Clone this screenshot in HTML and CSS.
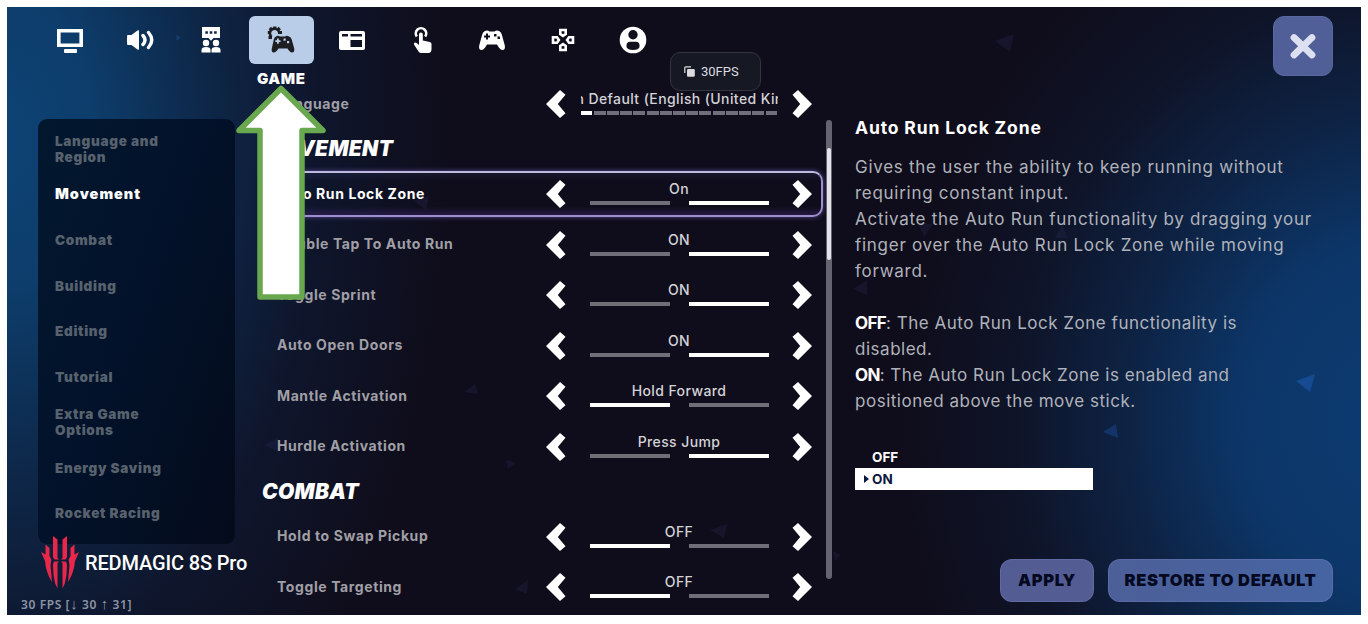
FILE: index.html
```html
<!DOCTYPE html>
<html lang="en">
<head>
    <meta charset="UTF-8">
    <meta name="viewport" content="width=device-width, initial-scale=1.0">
    <title>Game Settings</title>
    <link rel="stylesheet" href="styles.css">
</head>
<body>
    <div class="screen">
        <svg class="shards" viewBox="0 0 1354 608">
            <g fill="#2c2a58" opacity="0.28">
                <path d="M988 34l19-7-4 18z"/><path d="M911 216l15 1-9 13z"/><path d="M1048 231l7-13 6 13z"/>
                <path d="M846 282l14-9v15z"/><path d="M457 385l11-8 3 10z"/><path d="M499 453l10 3-8 6z"/>
                <path d="M257 438l14-7-1 13z"/><path d="M508 582l13-9-1 14z"/><path d="M703 523l17-6-3 14z"/>
                <path d="M826 544l8 4-6 6z"/><path d="M407 194l15-5-3 14z"/>
            </g>
            <path fill="#164a91" d="M1289 374l19-7-5 18z"/>
            <path fill="#173d7a" opacity="0.7" d="M1096 425l13-8 2 14z"/>
            <path fill="#1d4a80" opacity="0.6" d="M169 28l5 2-4 4z"/>
        </svg>

        <header class="topbar">
            <nav class="tabs">
                <a class="tab"><svg width="28" height="28" viewBox="0 0 28 28"><path fill="none" stroke="#fff" stroke-width="3.600" d="M2.800 4.800h22.400v14.400H2.800z"/><rect x="8" y="23" width="13" height="4" rx="1" fill="#fff"/></svg></a>
                <a class="tab"><svg width="28" height="28" viewBox="0 0 28 28"><path fill="#fff" d="M1 10q0-1 1-1h3.500l6-4.500q1.500-1 1.500 1v17q0 2-1.500 1l-6-4.500H2q-1 0-1-1z"/><path fill="none" stroke="#fff" stroke-width="3.400" stroke-linecap="round" d="M17 9.500q4 4.500 0 9M22.500 6.500q6.500 7.500 0 15"/></svg></a>
                <a class="tab"><svg width="28" height="28" viewBox="0 0 28 28"><path fill="#fff" fill-rule="evenodd" d="M5 1h18v11h-6.500L14 14.800 11.500 12H5zM8.300 5.200v2.600h2.600V5.200zM12.700 5.200v2.600h2.600V5.200zM17.100 5.200v2.600h2.600V5.200z"/><circle cx="9" cy="17" r="3.200" fill="#fff"/><circle cx="19" cy="17" r="3.200" fill="#fff"/><path fill="#fff" d="M4.500 26.500V24q0-3 4.500-3t4.500 3v2.500zM14.500 26.500V24q0-3 4.500-3t4.500 3v2.500z"/></svg></a>
                <a class="tab active">
                    <svg width="28" height="28" viewBox="0 0 28 28">
                        <path fill="none" stroke="#1d1e22" stroke-width="2.600" d="M4.600 11A4.700 4.700 0 1 1 12.200 6.500"/>
                        <path stroke="#1d1e22" stroke-width="3.200" d="M1.500 11.500h3.500M.8 6.500h3M2.800 2l2.400 2.400M7.800.4v3M12.800 2l-2.400 2.400M11 6.500h4"/>
                        <path fill="#1d1e22" fill-rule="evenodd" d="M9 10.500q2-1.500 4 0h5q2-1.500 4 0 2 .5 2.700 3l2.500 9q.6 4-2.200 4-2 0-4.500-4h-9q-2.500 4-4.700 4-2.700 0-2-4l2-9q.600-2.600 2.200-3zM10 12.500v1.700H8.300v1.800H10v1.700h1.800V16h1.700v-1.800h-1.700v-1.700zM16.500 12.600v2.200h2.200v-2.200zM20 15v2.200h2.200V15z"/>
                    </svg>
                    <span class="tab-name">GAME</span>
                </a>
                <a class="tab"><svg width="28" height="28" viewBox="0 0 28 28"><path fill="#fff" fill-rule="evenodd" d="M3 5h22q2 0 2 2v15q0 2-2 2H3q-2 0-2-2V7q0-2 2-2zM4 8v2.400h6V8zM12.500 8v2.400H24V8zM12.500 14v7H24v-7z"/></svg></a>
                <a class="tab"><svg width="28" height="28" viewBox="0 0 28 28"><path fill="none" stroke="#fff" stroke-width="2.600" d="M8.800 10.500A5.200 5.200 0 1 1 17.200 10.500"/><path fill="#fff" d="M11 8.500q0-2 1.900-2t1.900 2v6l7 1.500q1.700.5 1.700 2v5q0 4-3 4h-7q-2 0-3-1.500l-4.500-7q-.5-1.500 1-2 1.500-.3 4 2.500z"/></svg></a>
                <a class="tab"><svg width="28" height="28" viewBox="0 0 28 28"><path fill="#fff" fill-rule="evenodd" d="M7 5q2.500-1 4.500.5h5Q18.500 4 21 5q2 .7 2.800 3.500l3 11q.700 4.500-2.300 4.500-2.500 0-5.500-5.500H9Q6 24 3.500 24 .5 24 1.200 19.500l3-11Q5 5.700 7 5zM8 7.500v2H6v2h2v2h2v-2h2v-2h-2v-2zM16 8v2.500h2.500V8zM19.500 10.500V13H22v-2.500z"/></svg></a>
                <a class="tab"><svg width="28" height="28" viewBox="0 0 28 28"><path fill="none" stroke="#fff" stroke-width="2.600" d="M11.300 4h5.400v4L14 9.900 11.300 8zM11.300 24h5.400v-4L14 18.100 11.300 20zM4 11.300v5.400h4L9.900 14 8 11.300zM24 11.300v5.400h-4L18.100 14l1.900-2.700z"/></svg></a>
                <a class="tab"><svg width="28" height="28" viewBox="0 0 28 28"><circle cx="14" cy="14" r="13.300" fill="#fff"/><circle cx="14" cy="8.800" r="4.700" fill="#12101d"/><path fill="#12101d" d="M7.500 21v-1.500q0-3.700 3.700-3.700h5.600q3.700 0 3.700 3.700V21q-1 3-6.500 3t-6.500-3z"/></svg></a>
            </nav>
            <button class="close" aria-label="Close"><svg width="60" height="60" viewBox="0 0 60 60"><path stroke="#dde0f1" stroke-width="6.800" stroke-linecap="round" d="M21 21.500L39 39M39 21.500L21 39"/></svg></button>
        </header>

        <main class="content">
            <aside class="sidebar">
                <a>Language and<br>Region</a>
                <a class="current">Movement</a>
                <a>Combat</a>
                <a>Building</a>
                <a>Editing</a>
                <a>Tutorial</a>
                <a>Extra Game<br>Options</a>
                <a>Energy Saving</a>
                <a>Rocket Racing</a>
            </aside>

            <section class="options" id="options">
                <div class="row"><span class="label">Language</span>
                    <div class="stepper">
                        <svg class="chev" viewBox="0 0 20 28"><path d="M0 14L14 0l5.500 4.800-7.700 9.200 7.700 9.200L14 28z"/></svg>
                        <div class="value wide"><span>n Default (English (United Kin</span><div class="bars"><i class="on"></i><i></i><i></i><i></i><i></i><i></i><i></i><i></i><i></i><i></i><i></i><i></i><i></i><i></i><i></i></div></div>
                        <svg class="chev next" viewBox="0 0 20 28"><path d="M0 14L14 0l5.500 4.800-7.700 9.200 7.700 9.200L14 28z"/></svg>
                    </div>
                </div>
                <h2>MOVEMENT</h2>
                <div class="row selected"><span class="label">Auto Run Lock Zone</span>
                    <div class="stepper">
                        <svg class="chev" viewBox="0 0 20 28"><path d="M0 14L14 0l5.500 4.800-7.700 9.200 7.700 9.200L14 28z"/></svg>
                        <div class="value"><span>On</span><div class="bars"><i></i><i class="on"></i></div></div>
                        <svg class="chev next" viewBox="0 0 20 28"><path d="M0 14L14 0l5.500 4.800-7.700 9.200 7.700 9.200L14 28z"/></svg>
                    </div>
                </div>
                <div class="row"><span class="label">Double Tap To Auto Run</span>
                    <div class="stepper">
                        <svg class="chev" viewBox="0 0 20 28"><path d="M0 14L14 0l5.500 4.800-7.700 9.200 7.700 9.200L14 28z"/></svg>
                        <div class="value"><span>ON</span><div class="bars"><i></i><i class="on"></i></div></div>
                        <svg class="chev next" viewBox="0 0 20 28"><path d="M0 14L14 0l5.500 4.800-7.700 9.200 7.700 9.200L14 28z"/></svg>
                    </div>
                </div>
                <div class="row"><span class="label">Toggle Sprint</span>
                    <div class="stepper">
                        <svg class="chev" viewBox="0 0 20 28"><path d="M0 14L14 0l5.500 4.800-7.700 9.200 7.700 9.200L14 28z"/></svg>
                        <div class="value"><span>ON</span><div class="bars"><i></i><i class="on"></i></div></div>
                        <svg class="chev next" viewBox="0 0 20 28"><path d="M0 14L14 0l5.500 4.800-7.700 9.200 7.700 9.200L14 28z"/></svg>
                    </div>
                </div>
                <div class="row"><span class="label">Auto Open Doors</span>
                    <div class="stepper">
                        <svg class="chev" viewBox="0 0 20 28"><path d="M0 14L14 0l5.500 4.800-7.700 9.200 7.700 9.200L14 28z"/></svg>
                        <div class="value"><span>ON</span><div class="bars"><i></i><i class="on"></i></div></div>
                        <svg class="chev next" viewBox="0 0 20 28"><path d="M0 14L14 0l5.500 4.800-7.700 9.200 7.700 9.200L14 28z"/></svg>
                    </div>
                </div>
                <div class="row"><span class="label">Mantle Activation</span>
                    <div class="stepper">
                        <svg class="chev" viewBox="0 0 20 28"><path d="M0 14L14 0l5.500 4.800-7.700 9.200 7.700 9.200L14 28z"/></svg>
                        <div class="value"><span>Hold Forward</span><div class="bars"><i class="on"></i><i></i></div></div>
                        <svg class="chev next" viewBox="0 0 20 28"><path d="M0 14L14 0l5.500 4.800-7.700 9.200 7.700 9.200L14 28z"/></svg>
                    </div>
                </div>
                <div class="row"><span class="label">Hurdle Activation</span>
                    <div class="stepper">
                        <svg class="chev" viewBox="0 0 20 28"><path d="M0 14L14 0l5.500 4.800-7.700 9.200 7.700 9.200L14 28z"/></svg>
                        <div class="value"><span>Press Jump</span><div class="bars"><i></i><i class="on"></i></div></div>
                        <svg class="chev next" viewBox="0 0 20 28"><path d="M0 14L14 0l5.500 4.800-7.700 9.200 7.700 9.200L14 28z"/></svg>
                    </div>
                </div>
                <h2>COMBAT</h2>
                <div class="row"><span class="label">Hold to Swap Pickup</span>
                    <div class="stepper">
                        <svg class="chev" viewBox="0 0 20 28"><path d="M0 14L14 0l5.500 4.800-7.700 9.200 7.700 9.200L14 28z"/></svg>
                        <div class="value"><span>OFF</span><div class="bars"><i class="on"></i><i></i></div></div>
                        <svg class="chev next" viewBox="0 0 20 28"><path d="M0 14L14 0l5.500 4.800-7.700 9.200 7.700 9.200L14 28z"/></svg>
                    </div>
                </div>
                <div class="row"><span class="label">Toggle Targeting</span>
                    <div class="stepper">
                        <svg class="chev" viewBox="0 0 20 28"><path d="M0 14L14 0l5.500 4.800-7.700 9.200 7.700 9.200L14 28z"/></svg>
                        <div class="value"><span>OFF</span><div class="bars"><i class="on"></i><i></i></div></div>
                        <svg class="chev next" viewBox="0 0 20 28"><path d="M0 14L14 0l5.500 4.800-7.700 9.200 7.700 9.200L14 28z"/></svg>
                    </div>
                </div>
            </section>

            <div class="scrollbar"><div class="thumb"></div></div>

            <section class="detail">
                <h1>Auto Run Lock Zone</h1>
                <p>Gives the user the ability to keep running without<br>requiring constant input.<br>Activate the Auto Run functionality by dragging your<br>finger over the Auto Run Lock Zone while moving<br>forward.</p>
                <p class="states"><b>OFF</b>: The Auto Run Lock Zone functionality is<br>disabled.<br><b>ON</b>: The Auto Run Lock Zone is enabled and<br>positioned above the move stick.</p>
                <ul class="choices">
                    <li>OFF</li>
                    <li class="chosen">ON</li>
                </ul>
                <div class="actions">
                    <button class="btn">APPLY</button>
                    <button class="btn restore">RESTORE TO DEFAULT</button>
                </div>
            </section>
        </main>

        <div class="fps-badge">
            <svg width="11" height="11" viewBox="0 0 11 11"><path fill="none" stroke="#dcdce0" stroke-width="1.200" d="M.8 7V1.800q0-1 1-1H7"/><rect x="3" y="3" width="7.800" height="7.800" rx="1.300" fill="#dcdce0"/></svg>
            <span>30FPS</span>
        </div>

        <div class="device">
            <svg width="40" height="54" viewBox="0 0 40 54">
                <g fill="#e8274b">
                    <path id="half" d="M13 1l4.500 3.500v18.500l1.700 1.500h-4.700L13 22zM14 26.500h5.200L17.500 28v25.500L15 48q-2-8-2-18zM5.500 9.500L9.500 13v8l1.800 3.500-.8 6L12 47Q6 38 5 26L1 17l4.500 2.500z"/>
                    <use href="#half" transform="matrix(-1 0 0 1 40 0)"/>
                </g>
            </svg>
            <span>REDMAGIC 8S Pro</span>
        </div>
        <div class="fps-line">30 FPS [<span class="thin">↓</span> 30 <span class="thin">↑</span> 31]</div>

        <!-- Pointer to the Game tab -->
        <svg class="pointer" width="92" height="218" viewBox="0 0 92 218"><path fill="#fff" stroke="#6aa84f" stroke-width="5.500" stroke-linejoin="round" d="M46 5.500l42 42H67v166.500H25V47.500H4z"/></svg>
    </div>
</body>
</html>
```

FILE: styles.css
```css
* {
    margin: 0;
    padding: 0;
    box-sizing: border-box;
}

body {
    background: #fff;
    font-family: Inter, "Liberation Sans", sans-serif;
    padding: 7px;
    overflow: hidden;
}

.screen {
    position: relative;
    width: 1354px;
    height: 608px;
    overflow: hidden;
    background:
        radial-gradient(ellipse 440px 740px at 0 22%, #0d4374 0%, #0d3d6b 20%, rgba(13, 48, 88, 0.75) 45%, rgba(14, 28, 56, 0.6) 70%, rgba(15, 13, 27, 0) 100%),
        radial-gradient(ellipse 500px 560px at 103% 68%, #0c3b72 0%, #0c3668 32%, rgba(13, 42, 82, 0.75) 55%, rgba(14, 24, 48, 0.6) 78%, rgba(15, 13, 27, 0) 100%),
        #0f0d1b;
}

.shards {
    position: absolute;
    inset: 0;
}

.topbar {
    position: relative;
    z-index: 1;
    height: 72px;
    padding: 9px 28px 0 30.5px;
    display: flex;
    justify-content: space-between;
}

.tabs {
    display: flex;
    gap: 5.4px;
}

.tab {
    width: 65px;
    height: 48px;
    border-radius: 6px;
    display: flex;
    flex-direction: column;
    align-items: center;
    padding-top: 10px;
}

.tab svg {
    flex: none;
}

.tab.active {
    background: #b9cde8;
}

.tab-name {
    margin-top: 15px;
    color: #fff;
    font-size: 15px;
    line-height: 20px;
    font-weight: 900;
    letter-spacing: 0.6px;
}

.close {
    width: 60px;
    height: 60px;
    border: 1px solid #58689f;
    border-radius: 11px;
    background: #505f98;
}

.close svg {
    display: block;
    margin: -1px;
}

.content {
    position: relative;
    height: 536px;
    padding-left: 31px;
    display: flex;
    align-items: flex-start;
}

.sidebar {
    width: 197px;
    height: 425px;
    margin-top: 40px;
    padding: 7.5px 17px;
    border-radius: 9px;
    background: linear-gradient(110deg, #02182f 0%, #02122a 45%, #040b1b 100%);
}

.sidebar a {
    height: 45.5px;
    display: flex;
    align-items: center;
    color: #58626e;
    font-size: 13.5px;
    line-height: 16px;
    font-weight: 900;
    letter-spacing: 0.7px;
}

.sidebar a.current {
    color: #fff;
    font-size: 14.5px;
    letter-spacing: 1px;
    padding-bottom: 1px;
}

.options {
    width: 561px;
    margin-left: 27px;
}

.options h2 {
    height: 40px;
    line-height: 39px;
    color: #fff;
    font-size: 21px;
    font-weight: 900;
    font-style: italic;
    letter-spacing: 0.3px;
}

.row {
    height: 50.4px;
    padding-left: 15px;
    display: flex;
    align-items: center;
    justify-content: space-between;
}

.label {
    color: #a09fa6;
    font-size: 14px;
    font-weight: 700;
    letter-spacing: 0.6px;
    padding-bottom: 2px;
}

.row.selected {
    height: 46px;
    margin: 2px 0 2.4px;
    border: 2px solid #9d8fce;
    border-top-color: #bdb9e0;
    border-radius: 10px;
    padding-left: 13px;
    background: linear-gradient(180deg, rgba(60, 60, 110, 0.2), rgba(20, 16, 40, 0) 20%, rgba(20, 16, 40, 0) 80%, rgba(70, 40, 120, 0.4));
    box-shadow: 0 0 5px rgba(120, 95, 190, 0.7);
}

.row.selected .label {
    color: #fff;
}

.row.selected .stepper {
    margin-right: 9px;
}

.stepper {
    width: 266px;
    margin-right: 11px;
    display: flex;
    align-items: center;
    justify-content: space-between;
}

.chev {
    width: 20px;
    height: 28px;
    fill: #fff;
}

.chev.next {
    transform: scaleX(-1);
}

.value {
    width: 179px;
    height: 32px;
    color: #d3d2d7;
    font-size: 14px;
    font-weight: 500;
    line-height: 20px;
    letter-spacing: 0.4px;
    text-align: center;
    white-space: nowrap;
    padding-top: 1px;
}

.value span {
    display: block;
}

.bars {
    display: flex;
    gap: 19px;
    margin-top: 2px;
}

.bars i {
    flex: 1;
    height: 4px;
    background: #706e79;
}

.bars i.on {
    background: #fff;
}

.value.wide {
    width: 197px;
    overflow: hidden;
}

.value.wide span {
    margin-left: -5px;
}

.value.wide .bars {
    gap: 1.300px;
}

.scrollbar {
    width: 6px;
    height: 459px;
    margin: 41px 0 0 3px;
    border-radius: 3px;
    background: #65636f;
    padding: 28px 1px 0;
}

.thumb {
    height: 112px;
    border-radius: 2px;
    background: #e4e3e9;
}

.detail {
    width: 478px;
    height: 536px;
    margin-left: 23px;
    padding-top: 36px;
    display: flex;
    flex-direction: column;
}

.detail h1 {
    color: #fff;
    font-size: 17.5px;
    line-height: 26px;
    font-weight: 700;
    letter-spacing: 0.85px;
    margin-bottom: 12.5px;
}

.detail p {
    color: #b0b2ba;
    font-size: 17px;
    line-height: 26.100px;
    letter-spacing: 0.72px;
    margin-bottom: 26.100px;
    white-space: nowrap;
}

.detail p.states {
    letter-spacing: 0.52px;
}

.detail b {
    color: #fff;
    letter-spacing: -0.7px;
}

.choices {
    list-style: none;
    width: 238px;
    margin-top: 5.5px;
    color: #fff;
    font-size: 13.5px;
    font-weight: 700;
    line-height: 22px;
}

.choices li {
    padding-left: 17px;
}

.choices .chosen {
    display: flex;
    align-items: center;
    padding-left: 9px;
    background: #fff;
    color: #0b1740;
}

.choices .chosen::before {
    content: "";
    border: 4px solid transparent;
    border-left: 5px solid #0b1740;
    border-right: 0;
    margin-right: 3px;
}

.actions {
    display: flex;
    gap: 14px;
    margin: auto 0 13px 145px;
}

.btn {
    width: 94px;
    height: 43px;
    border: 1px solid rgba(120, 130, 190, 0.35);
    border-radius: 12px;
    background: #535d93;
    color: #04091f;
    font-family: inherit;
    font-size: 16.5px;
    font-weight: 900;
    letter-spacing: 0.7px;
    white-space: nowrap;
    padding-bottom: 2px;
}

.btn.restore {
    width: 225px;
    letter-spacing: 0.6px;
    background: linear-gradient(90deg, #4c5f99, #4664a2);
}

.fps-badge {
    position: absolute;
    z-index: 2;
    left: 663px;
    top: 45px;
    width: 91px;
    height: 39px;
    border: 1px solid #33343d;
    border-radius: 10px;
    background: #161823;
    color: #dcdce0;
    font-family: Roboto, sans-serif;
    font-size: 13px;
    display: flex;
    align-items: center;
    gap: 6px;
    padding-left: 13px;
}

.device {
    position: absolute;
    left: 33px;
    top: 527.5px;
    display: flex;
    align-items: center;
    gap: 5px;
    color: #fff;
    font-family: Roboto, sans-serif;
    font-size: 20px;
    font-weight: 500;
    letter-spacing: -0.15px;
}

.device span {
    padding-top: 2px;
}

.fps-line {
    position: absolute;
    left: 14px;
    top: 589px;
    color: #8d93a3;
    font-family: "Noto Sans", sans-serif;
    font-size: 12px;
    font-weight: 600;
    line-height: 18px;
    letter-spacing: 0.6px;
}

.fps-line .thin {
    font-size: 15px;
    line-height: 12px;
    font-weight: 400;
}

.pointer {
    position: absolute;
    z-index: 3;
    left: 228px;
    top: 75.5px;
}
```
